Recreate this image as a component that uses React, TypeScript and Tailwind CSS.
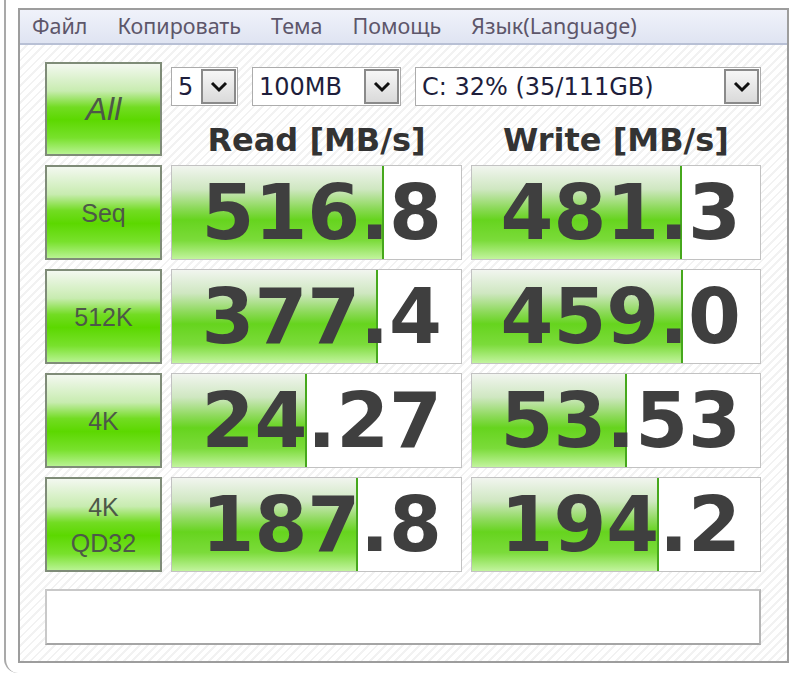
import React from 'react';

const rows = [
  { label: ['Seq'], read: '516.8', write: '481.3', rb: 212, wb: 210 },
  { label: ['512K'], read: '377.4', write: '459.0', rb: 206, wb: 211 },
  { label: ['4K'], read: '24.27', write: '53.53', rb: 135, wb: 155 },
  { label: ['4K', 'QD32'], read: '187.8', write: '194.2', rb: 186, wb: 187 },
];

const menu = ['Файл', 'Копировать', 'Тема', 'Помощь', 'Язык(Language)'];

function Chevron() {
  return (
    <svg width="18" height="12" viewBox="0 0 18 12">
      <polyline points="2,2 9,9 16,2" fill="none" stroke="#111" strokeWidth="3" />
    </svg>
  );
}

function Select({ value, width }: { value: string; width: string }) {
  return (
    <div className={`${width} h-[39px] flex items-center border border-[#acacac] bg-white`}>
      <span className="flex-1 pl-[6px] text-[24px] leading-[32px] text-[#1e1e3c] font-['DejaVu_Sans',sans-serif] whitespace-nowrap">
        {value}
      </span>
      <div className="w-[35px] h-[35px] mr-[1px] shrink-0 flex items-center justify-center border-2 border-[#8a8a8a] bg-[linear-gradient(to_bottom,#f6f6f6,#dadada)]">
        <Chevron />
      </div>
    </div>
  );
}

function GreenButton({ lines, tall, italic }: { lines: string[]; tall?: boolean; italic?: boolean }) {
  return (
    <div
      className={`w-[117px] ${tall ? 'h-[94px]' : 'h-[95px]'} shrink-0 flex flex-col items-center justify-center border-2 border-[#7f8c78] bg-[linear-gradient(to_bottom,#f3f8f0_0%,#c8ecb0_30%,#72dc22_48%,#5cd800_62%,#78e12c_82%,#b8f392_100%)] text-[#4d5848] font-['Liberation_Sans',sans-serif] leading-[36px]`}
    >
      {lines.map((l) => (
        <span key={l} className={italic ? 'italic text-[32px]' : 'text-[25px]'}>
          {l}
        </span>
      ))}
    </div>
  );
}

function Cell({ value, bar, width }: { value: string; bar: number; width: string }) {
  return (
    <div className={`${width} h-[95px] relative border border-[#c2c2c2] bg-white overflow-hidden`}>
      <div
        className="absolute left-0 top-0 bottom-0 border-r-2 border-[#46a81c] bg-[linear-gradient(to_bottom,#f1f5ef_0%,#cfe7c1_25%,#8ad956_46%,#66d41e_58%,#7bdb3a_80%,#c2f49e_100%)]"
        style={{ width: bar }}
      />
      <div className="relative h-full flex items-center justify-end pr-[19px] text-[76px] leading-none font-bold text-[#3f3f3f] font-['DejaVu_Sans',sans-serif]">
        {value}
      </div>
    </div>
  );
}

export default function App() {
  return (
    <div className="w-[800px] h-[675px] bg-white overflow-hidden">
      <div className="ml-[4px] w-[796px] h-[673px] border-l-2 border-[#a9a9a9] rounded-bl-[14px] pt-[8px] pl-[12px]">
        <div className="w-[771px] h-[655px] border-2 border-[#9d9d9d] flex flex-col">
          <div className="h-[35px] flex items-center gap-[30px] pl-[12px] border-b-2 border-[#b8c0d5] bg-[linear-gradient(to_bottom,#f0f2fa,#dfe4f2)] text-[21.5px] text-[#5d566a] font-['Noto_Sans',sans-serif]">
            {menu.map((m) => (
              <span key={m}>{m}</span>
            ))}
          </div>
          <div className="flex-1 bg-[repeating-linear-gradient(135deg,#ffffff_0px,#ffffff_4px,#f2f2f2_4px,#f2f2f2_6px)] pt-[17px] pl-[25px]">
            <div className="flex gap-[9px]">
              <GreenButton lines={['All']} tall italic />
              <div className="flex flex-col">
                <div className="mt-[5px] flex gap-[14px]">
                  <Select value="5" width="w-[67px]" />
                  <Select value="100MB" width="w-[149px]" />
                  <Select value="C: 32% (35/111GB)" width="w-[346px]" />
                </div>
                <div className="h-[50px] flex gap-[9px] items-center pt-[18px] text-[32px] font-bold text-[#333] font-['DejaVu_Sans',sans-serif] leading-none">
                  <div className="w-[291px] text-center">Read [MB/s]</div>
                  <div className="w-[290px] text-center">Write [MB/s]</div>
                </div>
              </div>
            </div>
            <div className="mt-[9px] flex flex-col gap-[9px]">
              {rows.map((r) => (
                <div key={r.read} className="flex gap-[9px]">
                  <GreenButton lines={r.label} />
                  <Cell value={r.read} bar={r.rb} width="w-[291px]" />
                  <Cell value={r.write} bar={r.wb} width="w-[290px]" />
                </div>
              ))}
            </div>
            <div className="mt-[17px] w-[716px] h-[56px] bg-white border-2 border-[#c9c9c9] border-b-[#a5a5a5] border-r-[#b5b5b5]" />
          </div>
        </div>
      </div>
    </div>
  );
}
